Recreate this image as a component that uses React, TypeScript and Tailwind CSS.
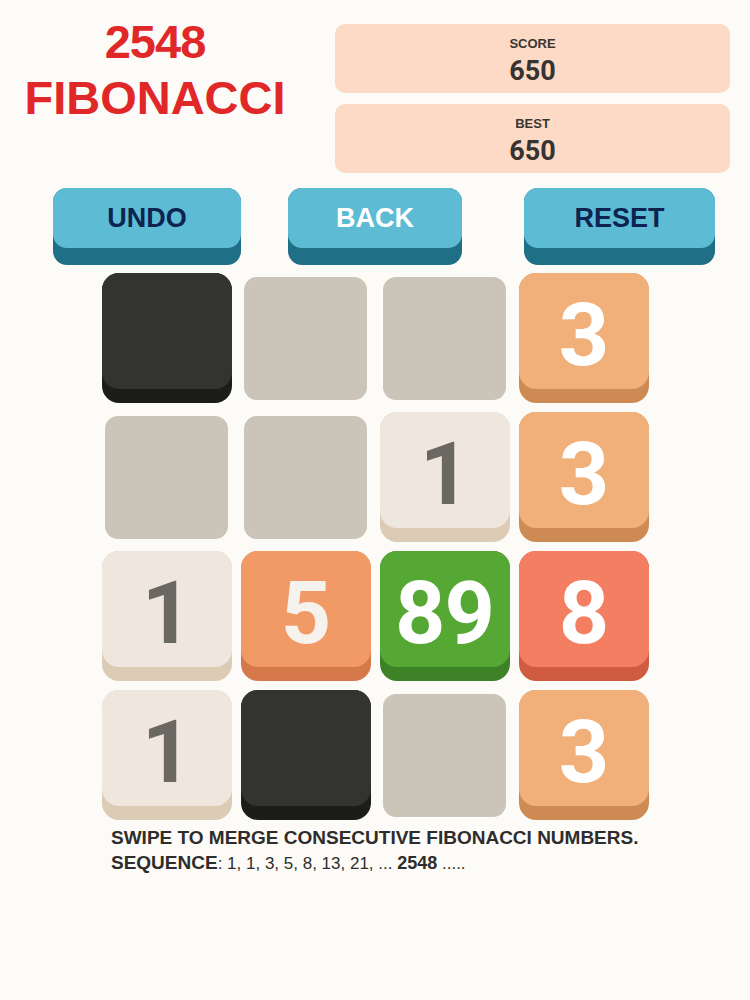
import React from "react";

type Tile =
  | { kind: "empty" }
  | { kind: "dark" }
  | { kind: "num"; v: string; face: string; band: string; text: string };

const one = { kind: "num", v: "1", face: "bg-[#efe7de]", band: "bg-[#dccbb5]", text: "text-[#6b6862]" } as const;
const three = { kind: "num", v: "3", face: "bg-[#f1b07a]", band: "bg-[#cd8a53]", text: "text-white" } as const;
const five = { kind: "num", v: "5", face: "bg-[#f29a66]", band: "bg-[#d5784a]", text: "text-[#f6f2ee]" } as const;
const eightyNine = { kind: "num", v: "89", face: "bg-[#56a834]", band: "bg-[#3e8228]", text: "text-white" } as const;
const eight = { kind: "num", v: "8", face: "bg-[#f37e62]", band: "bg-[#cf5c40]", text: "text-white" } as const;
const E = { kind: "empty" } as const;
const D = { kind: "dark" } as const;

const board: Tile[] = [
  D, E, E, three,
  E, E, one, three,
  one, five, eightyNine, eight,
  one, D, E, three,
];

function Cell({ t }: { t: Tile }) {
  if (t.kind === "empty") {
    return (
      <div className="w-[130px] h-[130px] flex items-center justify-center">
        <div className="w-[123px] h-[123px] rounded-[13px] bg-[#cbc4b8]" />
      </div>
    );
  }
  if (t.kind === "dark") {
    return (
      <div className="w-[130px] h-[130px] rounded-[17px] bg-[#1c1c1b]">
        <div className="h-[116px] rounded-[17px] bg-[#333332]" />
      </div>
    );
  }
  return (
    <div className={`w-[130px] h-[130px] rounded-[17px] ${t.band}`}>
      <div className={`h-[116px] rounded-[17px] ${t.face} flex items-center justify-center pt-[7px]`}>
        <span
          className={`${t.text} font-bold text-[88px] leading-[88px] tracking-[-1px]`}
          style={{ fontFamily: "Roboto, 'Liberation Sans', sans-serif" }}
        >
          {t.v}
        </span>
      </div>
    </div>
  );
}

function Btn({ label, w, light }: { label: string; w: string; light?: boolean }) {
  return (
    <div className={`${w} h-[77px] rounded-[14px] bg-[#1f6f87]`}>
      <div className="h-[60px] rounded-[14px] bg-[#5dbcd4] flex items-center justify-center">
        <span className={`font-bold text-[27px] leading-none ${light ? "text-white" : "text-[#0d2350]"}`}>
          {label}
        </span>
      </div>
    </div>
  );
}

function ScoreBox({ label, value }: { label: string; value: string }) {
  return (
    <div className="h-[69px] rounded-[10px] bg-[#fddac6] flex flex-col items-center pt-[12px]">
      <div className="text-[13px] leading-[16px] font-bold text-[#3a3632]">{label}</div>
      <div
        className="mt-[4px] text-[27px] leading-[30px] font-bold text-[#363330]"
        style={{ fontFamily: "Roboto, 'Liberation Sans', sans-serif" }}
      >
        {value}
      </div>
    </div>
  );
}

export default function App() {
  return (
    <div
      className="w-[750px] min-h-[1000px] bg-[#fdfbf8]"
      style={{ fontFamily: "'Liberation Sans', Arial, sans-serif" }}
    >
      <div className="flex pt-[24px]">
        <div className="w-[310px] text-center">
          <div className="-mt-[10px] text-[47px] leading-[56px] font-bold text-[#e02828] tracking-[-1px]">2548</div>
          <div className="text-[47px] leading-[56px] font-bold text-[#e02828]">FIBONACCI</div>
        </div>
        <div className="ml-[25px] w-[395px] flex flex-col gap-[11px]">
          <ScoreBox label="SCORE" value="650" />
          <ScoreBox label="BEST" value="650" />
        </div>
      </div>

      <div className="flex mt-[15px] pl-[53px]">
        <Btn label="UNDO" w="w-[188px]" />
        <div className="ml-[47px]">
          <Btn label="BACK" w="w-[174px]" light />
        </div>
        <div className="ml-[62px]">
          <Btn label="RESET" w="w-[191px]" />
        </div>
      </div>

      <div className="mt-[8px] mx-auto w-[547px] grid grid-cols-4 gap-[9px]">
        {board.map((t, i) => (
          <Cell key={i} t={t} />
        ))}
      </div>

      <div className="mt-[5px] pl-[111px] text-[19px] leading-[25px] text-[#2e2d2b]">
        <div className="font-bold">SWIPE TO MERGE CONSECUTIVE FIBONACCI NUMBERS.</div>
        <div>
          <span className="font-bold">SEQUENCE</span>
          <span className="text-[17px]">: 1, 1, 3, 5, 8, 13, 21, ... </span>
          <span className="font-bold text-[18px]">2548</span>
          <span className="text-[17px]"> .....</span>
        </div>
      </div>
    </div>
  );
}
